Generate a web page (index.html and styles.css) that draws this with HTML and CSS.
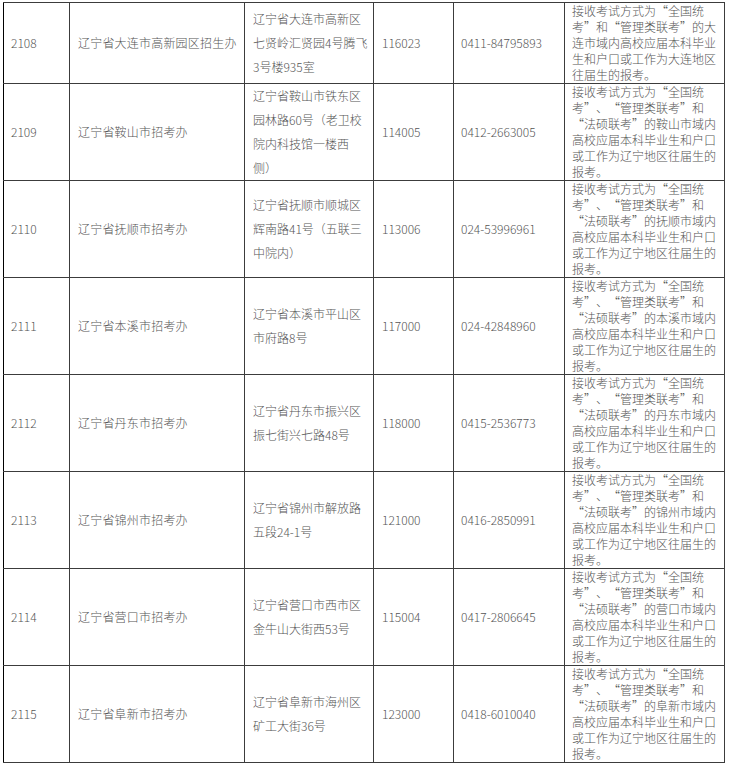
FILE: index.html
```html
<!DOCTYPE html>
<html lang="zh-CN">
<head>
<meta charset="utf-8">
<title>报考点</title>
<link rel="stylesheet" href="styles.css">
</head>
<body>
<table class="list">
  <colgroup>
    <col class="c-id"><col class="c-name"><col class="c-addr"><col class="c-zip"><col class="c-tel"><col class="c-note">
  </colgroup>
  <tbody>
    <tr>
      <td class="id">2108</td>
      <td class="name">辽宁省大连市高新园区招生办</td>
      <td class="addr">辽宁省大连市高新区<br>七贤岭汇贤园4号腾飞<br>3号楼935室</td>
      <td class="zip">116023</td>
      <td class="tel">0411-84795893</td>
      <td class="note">接收考试方式为<span class="qo">“</span>全国统<br>考<span class="qc">”</span>和<span class="qo">“</span>管理类联考<span class="qc">”</span>的大<br>连市域内高校应届本科毕业<br>生和户口或工作为大连地区<br>往届生的报考。</td>
    </tr>
    <tr>
      <td class="id">2109</td>
      <td class="name">辽宁省鞍山市招考办</td>
      <td class="addr">辽宁省鞍山市铁东区<br>园林路60号（老卫校<br>院内科技馆一楼西<br>侧）</td>
      <td class="zip">114005</td>
      <td class="tel">0412-2663005</td>
      <td class="note">接收考试方式为<span class="qo">“</span>全国统<br>考<span class="qc">”</span>、<span class="qo">“</span>管理类联考<span class="qc">”</span>和<br><span class="qo">“</span>法硕联考<span class="qc">”</span>的鞍山市域内<br>高校应届本科毕业生和户口<br>或工作为辽宁地区往届生的<br>报考。</td>
    </tr>
    <tr>
      <td class="id">2110</td>
      <td class="name">辽宁省抚顺市招考办</td>
      <td class="addr">辽宁省抚顺市顺城区<br>辉南路41号（五联三<br>中院内）</td>
      <td class="zip">113006</td>
      <td class="tel">024-53996961</td>
      <td class="note">接收考试方式为<span class="qo">“</span>全国统<br>考<span class="qc">”</span>、<span class="qo">“</span>管理类联考<span class="qc">”</span>和<br><span class="qo">“</span>法硕联考<span class="qc">”</span>的抚顺市域内<br>高校应届本科毕业生和户口<br>或工作为辽宁地区往届生的<br>报考。</td>
    </tr>
    <tr>
      <td class="id">2111</td>
      <td class="name">辽宁省本溪市招考办</td>
      <td class="addr">辽宁省本溪市平山区<br>市府路8号</td>
      <td class="zip">117000</td>
      <td class="tel">024-42848960</td>
      <td class="note">接收考试方式为<span class="qo">“</span>全国统<br>考<span class="qc">”</span>、<span class="qo">“</span>管理类联考<span class="qc">”</span>和<br><span class="qo">“</span>法硕联考<span class="qc">”</span>的本溪市域内<br>高校应届本科毕业生和户口<br>或工作为辽宁地区往届生的<br>报考。</td>
    </tr>
    <tr>
      <td class="id">2112</td>
      <td class="name">辽宁省丹东市招考办</td>
      <td class="addr">辽宁省丹东市振兴区<br>振七街兴七路48号</td>
      <td class="zip">118000</td>
      <td class="tel">0415-2536773</td>
      <td class="note">接收考试方式为<span class="qo">“</span>全国统<br>考<span class="qc">”</span>、<span class="qo">“</span>管理类联考<span class="qc">”</span>和<br><span class="qo">“</span>法硕联考<span class="qc">”</span>的丹东市域内<br>高校应届本科毕业生和户口<br>或工作为辽宁地区往届生的<br>报考。</td>
    </tr>
    <tr>
      <td class="id">2113</td>
      <td class="name">辽宁省锦州市招考办</td>
      <td class="addr">辽宁省锦州市解放路<br>五段24-1号</td>
      <td class="zip">121000</td>
      <td class="tel">0416-2850991</td>
      <td class="note">接收考试方式为<span class="qo">“</span>全国统<br>考<span class="qc">”</span>、<span class="qo">“</span>管理类联考<span class="qc">”</span>和<br><span class="qo">“</span>法硕联考<span class="qc">”</span>的锦州市域内<br>高校应届本科毕业生和户口<br>或工作为辽宁地区往届生的<br>报考。</td>
    </tr>
    <tr>
      <td class="id">2114</td>
      <td class="name">辽宁省营口市招考办</td>
      <td class="addr">辽宁省营口市西市区<br>金牛山大街西53号</td>
      <td class="zip">115004</td>
      <td class="tel">0417-2806645</td>
      <td class="note">接收考试方式为<span class="qo">“</span>全国统<br>考<span class="qc">”</span>、<span class="qo">“</span>管理类联考<span class="qc">”</span>和<br><span class="qo">“</span>法硕联考<span class="qc">”</span>的营口市域内<br>高校应届本科毕业生和户口<br>或工作为辽宁地区往届生的<br>报考。</td>
    </tr>
    <tr>
      <td class="id">2115</td>
      <td class="name">辽宁省阜新市招考办</td>
      <td class="addr">辽宁省阜新市海州区<br>矿工大街36号</td>
      <td class="zip">123000</td>
      <td class="tel">0418-6010040</td>
      <td class="note">接收考试方式为<span class="qo">“</span>全国统<br>考<span class="qc">”</span>、<span class="qo">“</span>管理类联考<span class="qc">”</span>和<br><span class="qo">“</span>法硕联考<span class="qc">”</span>的阜新市域内<br>高校应届本科毕业生和户口<br>或工作为辽宁地区往届生的<br>报考。</td>
    </tr>
  </tbody>
</table>
</body>
</html>
```

FILE: styles.css
```css
html, body {
  margin: 0;
  padding: 0;
  background: #ffffff;
}

body {
  padding: 2px 0 0 3px;
  font-family: "Noto Sans CJK SC", "Liberation Sans", sans-serif;
  font-size: 12px;
  font-weight: 300;
  color: #555555;
}

.list {
  border-collapse: collapse;
  table-layout: fixed;
  width: 722px;
}

.c-id { width: 66px; }
.c-name { width: 175px; }
.c-addr { width: 129px; }
.c-zip { width: 80px; }
.c-tel { width: 111px; }
.c-note { width: 160px; }

.list td {
  border: 1px solid #3c3c3c;
  padding: 0 7px;
  vertical-align: middle;
  line-height: 16px;
  white-space: nowrap;
  overflow: hidden;
}

.list td.id {
  border-left-color: #000000;
  padding-left: 7px;
}

.list td.name {
  padding-left: 8px;
  letter-spacing: 0.2px;
}

.list td.addr {
  padding: 0 4px 0 8px;
  line-height: 24px;
}

.list td.zip {
  padding-left: 8px;
}

.list td.note {
  line-height: 16px;
}

.qo,
.qc {
  display: inline-block;
  width: 12px;
}

.qo {
  text-align: right;
}

.qc {
  text-align: left;
}
```
